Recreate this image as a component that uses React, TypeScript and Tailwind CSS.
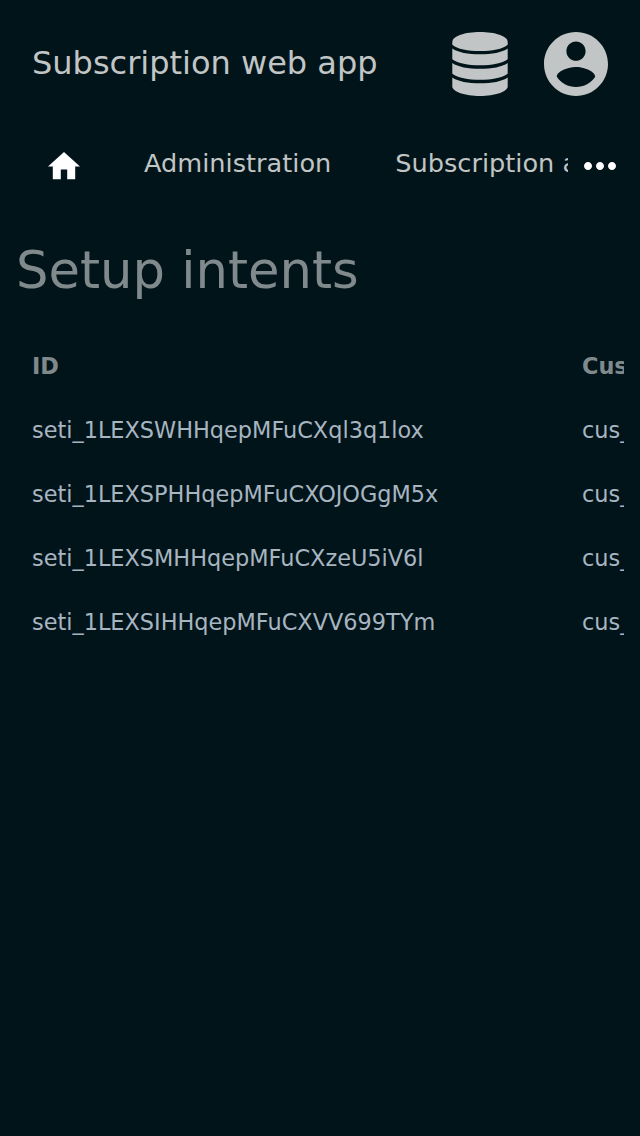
const rows = [
  'seti_1LEXSWHHqepMFuCXql3q1lox',
  'seti_1LEXSPHHqepMFuCXOJOGgM5x',
  'seti_1LEXSMHHqepMFuCXzeU5iV6l',
  'seti_1LEXSIHHqepMFuCXVV699TYm',
];

function Header() {
  return (
    <header className="flex h-32 items-center px-8">
      <div className="flex-1 whitespace-nowrap pb-0.5 text-[32px] leading-[38px] text-[#c1c5c5]">Subscription web app</div>
      <button type="button" aria-label="Database" className="mr-9">
        <svg className="block h-16 w-14" viewBox="0 0 56 64" fill="#c1c5c5">
          <path d="M.3 10C.3 4 13 0 28 0S55.700 4 55.700 10V12.700C51 17 40 19 28 19S5 17 .3 12.700Z" />
          <path d="M.3 16.500C6 20.500 16 22.300 28 22.300S50 20.500 55.700 16.500V27.300C50 31.500 40 33.300 28 33.300S6 31.500 .3 27.300Z" />
          <path d="M.3 31C6 35 16 36.800 28 36.800S50 35 55.700 31V41.800C50 46 40 47.800 28 47.800S6 46 .3 41.800Z" />
          <path d="M.3 45.500C6 49.500 16 51.300 28 51.300S50 49.500 55.700 45.500V54.500C55.700 59.500 43 64 28 64S.3 59.500 .3 54.500Z" />
        </svg>
      </button>
      <button type="button" aria-label="Account">
        <svg className="block size-16" viewBox="2 2 20 20" fill="#c1c5c5">
          <path d="M12 2C6.480 2 2 6.480 2 12s4.480 10 10 10 10-4.480 10-10S17.520 2 12 2zm0 3c1.660 0 3 1.340 3 3s-1.340 3-3 3-3-1.340-3-3 1.340-3 3-3zm0 14.200c-2.500 0-4.710-1.280-6-3.220.03-1.990 4-3.080 6-3.080 1.990 0 5.970 1.090 6 3.080-1.290 1.940-3.500 3.220-6 3.220z" />
        </svg>
      </button>
    </header>
  );
}

function Navigation() {
  return (
    <nav className="flex h-[72px] items-center text-[25.6px] leading-[30px] text-[#c1c5c5]">
      <div className="flex w-[568px] items-center overflow-hidden whitespace-nowrap pl-12">
        <svg className="mt-1 block h-[27.200px] w-8 shrink-0" viewBox="2 3 20 17" fill="white">
          <path d="M10 20v-6h4v6h5v-8h3L12 3 2 12h3v8z" />
        </svg>
        <span className="ml-16 pb-0.5">Administration</span>
        <span className="ml-16 pb-0.5">Subscription administration</span>
      </div>
      <svg className="ml-4 mt-1 block h-8 w-8" viewBox="4 4 16 16" fill="white">
        <path d="M6 10c-1.100 0-2 .9-2 2s.9 2 2 2 2-.9 2-2-.9-2-2-2zm12 0c-1.100 0-2 .9-2 2s.9 2 2 2 2-.9 2-2-.9-2-2-2zm-6 0c-1.100 0-2 .9-2 2s.9 2 2 2 2-.9 2-2-.9-2-2-2z" />
      </svg>
    </nav>
  );
}

export default function App() {
  return (
    <div className="h-[1136px] w-[640px] overflow-hidden bg-[#001419] font-['DejaVu_Sans',sans-serif]">
      <Header />
      <Navigation />
      <main className="px-4 pt-[40px]">
        <h1 className="text-[51.200px] leading-[60px] text-[#808a8c]">Setup intents</h1>
        <div className="mt-[35px] overflow-hidden whitespace-nowrap text-[22.400px] text-[#a8b5c1]">
          <div className="flex h-16 items-center px-4 font-bold text-[#808a8c]">
            <div className="w-[550px] shrink-0">ID</div>
            <div>Customer</div>
          </div>
          {rows.map((id) => (
            <div key={id} className="flex h-16 items-center px-4">
              <div className="w-[550px] shrink-0">{id}</div>
              <div>cus_</div>
            </div>
          ))}
        </div>
      </main>
    </div>
  );
}
